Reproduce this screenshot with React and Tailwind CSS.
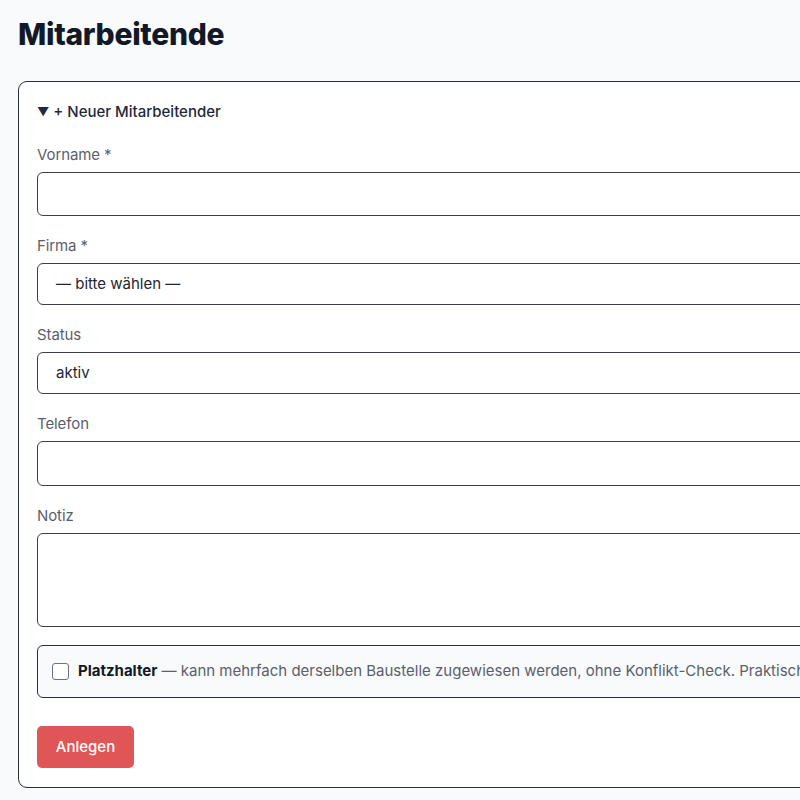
import React from "react";

const font = { fontFamily: "Inter, 'Noto Sans', sans-serif" };

function Label({ children }) {
  return (
    <div className="text-[15px] leading-5 text-[#5b5f6b] tracking-[-0.1px]">{children}</div>
  );
}

export default function App() {
  return (
    <div className="w-screen h-screen overflow-hidden bg-[#f8fafc]" style={font}>
      <div className="w-[1200px] pl-[18px] pt-[17px]">
        <h1 className="text-[30px] leading-[35px] font-extrabold text-[#111827] tracking-[-0.3px]">
          Mitarbeitende
        </h1>
        <div className="mt-[29px] w-[1100px] rounded-[9px] border-[1.5px] border-[#2a2f3a] bg-white px-[18px] pt-[20px] pb-[19px]">
          <div className="flex items-center gap-[4px] text-[15px] leading-5 font-medium text-[#1e293b]">
            <span className="text-[12px] text-[#1e293b]">▼</span>
            <span>+ Neuer Mitarbeitender</span>
          </div>

          <div className="mt-[23px] flex flex-col">
            <Label>Vorname *</Label>
            <div className="mt-[7px] h-[44px] rounded-[6px] border-[1.5px] border-[#3b3f4a] bg-white" />

            <div className="mt-[20px]">
              <Label>Firma *</Label>
            </div>
            <div className="mt-[7px] flex h-[42px] items-center rounded-[6px] border-[1.5px] border-[#3b3f4a] bg-white pl-[18px] text-[15px] text-[#1f2430]">
              — bitte wählen —
            </div>

            <div className="mt-[20px]">
              <Label>Status</Label>
            </div>
            <div className="mt-[7px] flex h-[42px] items-center rounded-[6px] border-[1.5px] border-[#3b3f4a] bg-white pl-[18px] text-[15px] text-[#1f2430]">
              aktiv
            </div>

            <div className="mt-[20px]">
              <Label>Telefon</Label>
            </div>
            <div className="mt-[7px] h-[45px] rounded-[6px] border-[1.5px] border-[#3b3f4a] bg-white" />

            <div className="mt-[20px]">
              <Label>Notiz</Label>
            </div>
            <div className="mt-[7px] h-[94px] rounded-[6px] border-[1.5px] border-[#3b3f4a] bg-white" />

            <div className="mt-[18px] flex h-[53px] items-center gap-[9px] rounded-[6px] border-[1.5px] border-[#2a2f3a] bg-[#f8fafc] pl-[14px] whitespace-nowrap">
              <span className="h-[17px] w-[17px] rounded-[3px] border-[1.5px] border-[#6b7280] bg-white" />
              <span className="text-[15px] text-[#5b5f6b]">
                <b className="font-bold text-[#111827]">Platzhalter</b> — kann mehrfach derselben Baustelle zugewiesen werden, ohne Konflikt-Check. Praktisch für Springer oder unbesetzte Stellen.
              </span>
            </div>

            <div className="mt-[28px]">
              <button className="h-[42px] w-[97px] rounded-[5px] bg-[#e05656] text-[15px] font-medium text-white">
                Anlegen
              </button>
            </div>
          </div>
        </div>
      </div>
    </div>
  );
}
